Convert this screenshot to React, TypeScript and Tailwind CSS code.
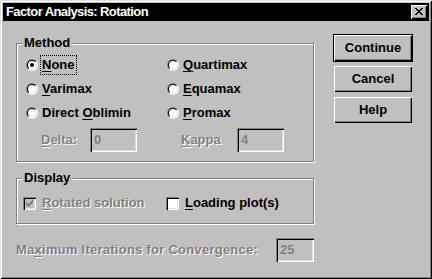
const disabled = "text-[#808080] [text-shadow:1px_1px_0_#fff]";
const sunken =
  "shadow-[inset_1px_1px_0_#808080,inset_2px_2px_0_#000,inset_-1px_-1px_0_#fff,inset_-2px_-2px_0_#dfdfdf]";
const raised =
  "shadow-[inset_1px_1px_0_#fff,inset_-1px_-1px_0_#000,inset_-2px_-2px_0_#808080]";

function Radio({ checked }: { checked?: boolean }) {
  return (
    <svg width="12" height="12" viewBox="0 0 12 12" className="shrink-0">
      <defs>
        <linearGradient id="radio-outer" x1="0" y1="0" x2="1" y2="1">
          <stop offset="0.5" stopColor="#808080" />
          <stop offset="0.5" stopColor="#ffffff" />
        </linearGradient>
        <linearGradient id="radio-inner" x1="0" y1="0" x2="1" y2="1">
          <stop offset="0.5" stopColor="#000000" />
          <stop offset="0.5" stopColor="#dfdfdf" />
        </linearGradient>
      </defs>
      <circle cx="6" cy="6" r="6" fill="url(#radio-outer)" />
      <circle cx="6" cy="6" r="5" fill="url(#radio-inner)" />
      <circle cx="6" cy="6" r="4" fill="#fff" />
      {checked && <circle cx="6" cy="6" r="2" fill="#000" />}
    </svg>
  );
}

function Checkbox({ checked, off }: { checked?: boolean; off?: boolean }) {
  return (
    <div
      className={`w-[13px] h-[13px] shrink-0 flex items-center justify-center ${sunken} ${
        off ? "bg-[#c0c0c0]" : "bg-white"
      }`}
    >
      {checked && (
        <svg width="7" height="7" viewBox="0 0 7 7" shapeRendering="crispEdges">
          <path
            d="M0 2h1v3h-1zM1 3h1v3h-1zM2 4h1v3h-1zM3 3h1v3h-1zM4 2h1v3h-1zM5 1h1v3h-1zM6 0h1v3h-1z"
            fill={off ? "#808080" : "#000"}
          />
        </svg>
      )}
    </div>
  );
}

function Field({ value, w }: { value: string; w: string }) {
  return (
    <div className={`${w} h-[24px] shrink-0 flex items-center pl-[4px] text-[#808080] bg-[#c0c0c0] ${sunken}`}>
      {value}
    </div>
  );
}

function Choice({ label, u, rest, checked, focus }: { label?: string; u: string; rest: string; checked?: boolean; focus?: boolean }) {
  return (
    <div className="flex items-center">
      <Radio checked={checked} />
      <span className={`ml-[4px] ${focus ? "outline-1 outline-dotted outline-black outline-offset-1" : ""}`}>
        {label}
        <u className="underline-offset-[2px]">{u}</u>
        {rest}
      </span>
    </div>
  );
}

export default function App() {
  return (
    <div className="w-[432px] h-[279px] bg-[#c0c0c0] p-[3px] flex flex-col font-['Liberation_Sans',Arial,sans-serif] text-[13px] leading-[16px] font-bold text-black shadow-[inset_1px_1px_0_#dfdfdf,inset_-1px_-1px_0_#000,inset_2px_2px_0_#fff,inset_-2px_-2px_0_#808080] select-none">
      <div className="h-[18px] shrink-0 bg-black flex items-center pl-[3px] pr-[2px]">
        <span className="text-white tracking-[-0.6px]">Factor Analysis: Rotation</span>
        <div className={`ml-auto w-[16px] h-[14px] bg-[#c0c0c0] flex items-center justify-center pr-[1px] pb-[1px] ${raised}`}>
          <svg width="8" height="7" viewBox="0 0 8 7" shapeRendering="crispEdges">
            <path
              d="M0 0h2v1h-2zM6 0h2v1h-2zM1 1h2v1h-2zM5 1h2v1h-2zM2 2h4v1h-4zM3 3h2v1h-2zM2 4h4v1h-4zM1 5h2v1h-2zM5 5h2v1h-2zM0 6h2v1h-2zM6 6h2v1h-2z"
              fill="#000"
            />
          </svg>
        </div>
      </div>

      <div className="flex pl-[13px]">
        <div className="w-[298px] flex flex-col pt-[14px]">
          <fieldset className="border border-[#808080] shadow-[1px_1px_0_#fff,inset_1px_1px_0_#fff] pt-[2px] pb-[9px]">
            <legend className="ml-[5px] px-[2px] bg-[#c0c0c0]">Method</legend>
            <div className="ml-[9px] grid grid-cols-[141px_1fr] grid-rows-[24px_24px_24px]">
              <Choice u="N" rest="one" checked focus />
              <Choice u="Q" rest="uartimax" />
              <Choice u="V" rest="arimax" />
              <Choice u="E" rest="quamax" />
              <Choice label="Direct " u="O" rest="blimin" />
              <Choice u="P" rest="romax" />
            </div>
            <div className="ml-[9px] mt-[3px] grid grid-cols-[141px_1fr]">
              <div className="flex items-center pl-[15px]">
                <span className={`w-[49px] ${disabled}`}>
                  <u className="underline-offset-[2px]">D</u>elta:
                </span>
                <Field value="0" w="w-[47px]" />
              </div>
              <div className="flex items-center pl-[14px]">
                <span className={`w-[56px] ${disabled}`}>
                  <u className="underline-offset-[2px]">K</u>appa
                </span>
                <Field value="4" w="w-[47px]" />
              </div>
            </div>
          </fieldset>

          <fieldset className="mt-[8px] border border-[#808080] shadow-[1px_1px_0_#fff,inset_1px_1px_0_#fff] pt-[5px] pb-[8px]">
            <legend className="ml-[5px] px-[2px] bg-[#c0c0c0]">Display</legend>
            <div className="ml-[6px] h-[24px] grid grid-cols-[143px_1fr]">
              <div className="flex items-center">
                <Checkbox checked off />
                <span className={`ml-[6px] ${disabled}`}>
                  <u className="underline-offset-[2px]">R</u>otated solution
                </span>
              </div>
              <div className="flex items-center">
                <Checkbox />
                <span className="ml-[6px]">
                  <u className="underline-offset-[2px]">L</u>oading plot(s)
                </span>
              </div>
            </div>
          </fieldset>

          <div className="mt-[14px] h-[24px] flex items-center">
            <span className={`w-[260px] tracking-[0.25px] ${disabled}`}>
              Ma<u className="underline-offset-[2px]">x</u>imum Iterations for Convergence:
            </span>
            <Field value="25" w="w-[38px]" />
          </div>
        </div>

        <div className="ml-[19px] pt-[13px] flex flex-col">
          <div className="w-[80px] h-[28px] border border-black">
            <div className={`h-full flex items-center justify-center pb-[1px] ${raised}`}>Continue</div>
          </div>
          <div className={`mt-[4px] mx-[1px] w-[78px] h-[26px] flex items-center justify-center pb-[1px] ${raised}`}>Cancel</div>
          <div className={`mt-[5px] mx-[1px] w-[78px] h-[26px] flex items-center justify-center pb-[1px] ${raised}`}>Help</div>
        </div>
      </div>
    </div>
  );
}
